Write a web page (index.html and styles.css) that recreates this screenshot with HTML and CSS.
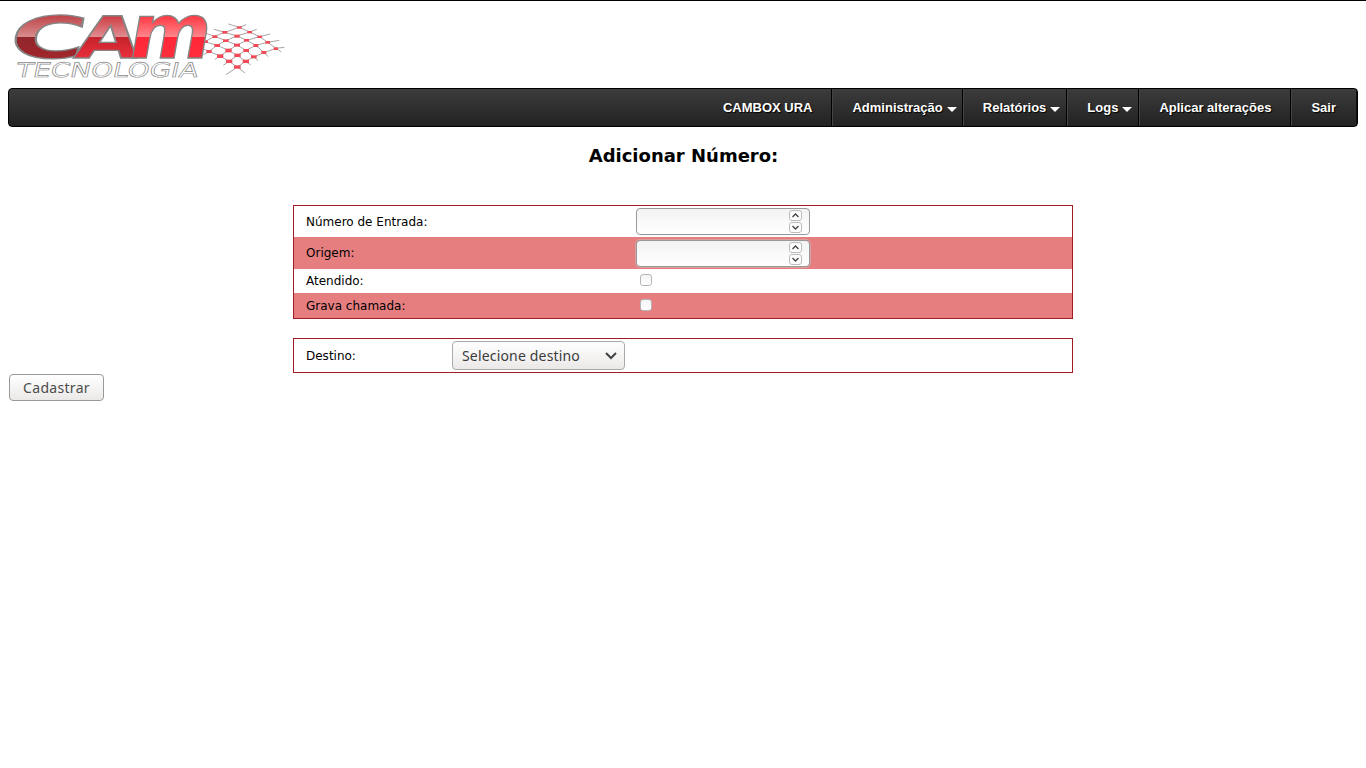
FILE: index.html
```html
<!DOCTYPE html>
<html lang="pt-BR">
<head>
<meta charset="utf-8">
<title>CAMBOX URA</title>
<link rel="stylesheet" href="styles.css">
</head>
<body>
<header class="header">
<svg class="logo" width="290" height="84" viewBox="0 0 290 84">
  <defs>
    <linearGradient id="dark" gradientUnits="userSpaceOnUse" x1="0" y1="-43" x2="0" y2="0">
      <stop offset="0" stop-color="#bd4349"/><stop offset=".5" stop-color="#d98a8c"/><stop offset=".51" stop-color="#90262c"/><stop offset="1" stop-color="#a1262d"/>
    </linearGradient>
    <linearGradient id="mid" gradientUnits="userSpaceOnUse" x1="0" y1="-43" x2="0" y2="0">
      <stop offset="0" stop-color="#cb3940"/><stop offset=".5" stop-color="#e08c90"/><stop offset=".51" stop-color="#c4232d"/><stop offset="1" stop-color="#e92e3b"/>
    </linearGradient>
    <linearGradient id="bright" gradientUnits="userSpaceOnUse" x1="0" y1="-43" x2="0" y2="0">
      <stop offset="0" stop-color="#ff3540"/><stop offset=".5" stop-color="#ff858a"/><stop offset=".51" stop-color="#ff2637"/><stop offset="1" stop-color="#ff2e3c"/>
    </linearGradient>
  </defs>
  <g class="mesh" transform="translate(140 0) scale(.33333)">
    <g fill="none" stroke="#8b8082" stroke-width="2.2">
      <path d="M265 72 298 82 329 96 359 110 383 127 408 145 424 156M222 88 254 97 291 108 320 121 348 136 372 158 385 170M198 100 224 109 257 122 291 135 318 151 341 171 355 182M180 120 195 125 231 136 266 151 292 166 317 184 332 195M186 145 207 154 240 168 267 184 292 201 315 219"/>
      <path d="M319 74 298 82 254 97 224 109 195 125 180 135M350 88 329 96 291 108 257 122 231 136 207 154 190 165M390 102 359 110 320 121 291 135 266 151 240 168 225 178M418 121 383 127 348 136 318 151 292 166 267 184 250 196M433 142 408 145 372 158 341 171 317 184 292 201 258 224"/>
    </g>
    <g fill="#f24b58">
      <rect x="291" y="79" width="14" height="7"/><rect x="322" y="93" width="14" height="7"/><rect x="352" y="107" width="14" height="7"/><rect x="376" y="123" width="14" height="8"/><rect x="401" y="142" width="13" height="8"/>
      <rect x="247" y="93" width="15" height="8"/><rect x="283" y="104" width="16" height="9"/><rect x="312" y="117" width="15" height="8"/><rect x="340" y="132" width="15" height="9"/><rect x="364" y="153" width="15" height="9"/>
      <rect x="217" y="106" width="15" height="8"/><rect x="249" y="118" width="17" height="8"/><rect x="282" y="131" width="18" height="9"/><rect x="310" y="147" width="17" height="9"/><rect x="333" y="166" width="17" height="9"/>
      <rect x="190" y="121" width="14" height="8"/><rect x="223" y="132" width="17" height="9"/><rect x="256" y="146" width="19" height="11"/><rect x="283" y="161" width="19" height="10"/><rect x="308" y="179" width="19" height="10"/>
      <rect x="199" y="150" width="16" height="9"/><rect x="231" y="163" width="19" height="11"/><rect x="258" y="179" width="19" height="10"/><rect x="282" y="196" width="20" height="10"/>
    </g>
  </g>
  <g class="brand">
    <text transform="translate(7 58) skewX(-10)" font-size="58" textLength="76" lengthAdjust="spacingAndGlyphs" fill="url(#dark)">C</text>
    <text transform="translate(73 58) skewX(-10)" font-size="58" textLength="64" lengthAdjust="spacingAndGlyphs" fill="url(#mid)">A</text>
    <text transform="translate(126 58) skewX(-10)" font-size="76" textLength="82" lengthAdjust="spacingAndGlyphs" fill="url(#bright)">m</text>
  </g>
  <text class="brand-sub" transform="translate(15 77) skewX(-12)" textLength="182" lengthAdjust="spacingAndGlyphs">TECNOLOGIA</text>
</svg>
</header>
<nav class="menu">
  <a class="item snug">CAMBOX URA</a>
  <a class="item drop wide">Administração</a>
  <a class="item drop">Relatórios</a>
  <a class="item drop">Logs</a>
  <a class="item snug">Aplicar alterações</a>
  <a class="item">Sair</a>
</nav>
<h1 class="title">Adicionar Número:</h1>
<form>
<section class="panel">
  <div class="row tall"><label class="label">Número de Entrada:</label>
    <span class="spin"><span class="steps"><i><svg viewBox="0 0 11 9"><path d="M2.5 6 5.5 3 8.5 6"/></svg></i><i><svg viewBox="0 0 11 9"><path d="M2.5 3 5.5 6 8.5 3"/></svg></i></span></span></div>
  <div class="row tall alt"><label class="label">Origem:</label>
    <span class="spin"><span class="steps"><i><svg viewBox="0 0 11 9"><path d="M2.5 6 5.5 3 8.5 6"/></svg></i><i><svg viewBox="0 0 11 9"><path d="M2.5 3 5.5 6 8.5 3"/></svg></i></span></span></div>
  <div class="row"><label class="label">Atendido:</label><span class="check"></span></div>
  <div class="row alt last"><label class="label">Grava chamada:</label><span class="check"></span></div>
</section>
<section class="panel target">
  <label class="target-label">Destino:</label>
  <div class="select"><span>Selecione destino</span><svg width="12" height="8" viewBox="0 0 12 8"><path d="M1 1 6 6 11 1"/></svg></div>
</section>
<button class="submit" type="button">Cadastrar</button>
</form>
</body>
</html>
```
FILE: styles.css
```css
* { box-sizing: border-box; }
body { margin: 0; padding: 0 8px; height: 768px; border-top: 1px solid #000; background: #fff; color: #000; font: 12px "DejaVu Sans", sans-serif; }
.header { height: 88px; }
.logo { display: block; margin: -1px 0 4px -8px; overflow: visible; }
.brand { font-family: "DejaVu Sans", sans-serif; font-weight: bold; stroke: #858585; stroke-width: 1.3px; }
.brand-sub { font: 20px "DejaVu Sans", sans-serif; fill: #fff; stroke: #8c8c8c; stroke-width: .6px; }
.menu { display: flex; justify-content: flex-end; height: 39px; border: 1px solid #000; border-radius: 4px; background: linear-gradient(#3c3c3c, #222); }
.item { display: flex; align-items: center; padding: 0 20px 1px 19px; border-left: 1px solid #444; border-right: 1px solid #000; color: #fff; font: bold 13px "Liberation Sans", sans-serif; text-shadow: 1px 1px 1px #000; white-space: nowrap; }
.item:first-child { border-left: 0; }
.item:last-child { border-right: 1px solid #111; }
.snug { padding-right: 19px; }
.drop { padding-right: 6px; }
.drop.wide { padding-right: 5px; }
.drop::after { content: ""; margin: 5px 0 0 4px; border: 5px solid transparent; border-top-color: #fff; border-bottom: 0; }
.title { margin: 0; padding: 18px 0 39px 1px; font: bold 18px/21px "DejaVu Sans", sans-serif; text-align: center; }
.panel { width: 780px; margin: 0 auto; border: 1px solid #a01d26; }
.row { display: flex; align-items: center; height: 24px; }
.row.tall { height: 31px; }
.row.tall.alt { height: 32px; }
.row.last { height: 25px; }
.alt { background: #e67e80; }
.label { width: 342px; padding-left: 12px; }
.spin { display: flex; justify-content: flex-end; width: 174px; height: 27px; padding: 1px 7px 0 0; border: 1px solid #999; border-radius: 4px; background: linear-gradient(#f3f3f3, #fff); }
.alt .spin { box-shadow: 0 0 0 1px #d9a0a1; }
.steps { display: flex; flex-direction: column; gap: 1px; }
.steps i { display: block; width: 13px; height: 11px; border: 1px solid #bbb; border-radius: 3px; background: #fdfdfd; }
.steps svg { display: block; width: 11px; height: 9px; fill: none; stroke: #444; stroke-width: 1.3; }
.check { width: 12px; height: 12px; margin: 0 0 2px 4px; border: 1px solid #b5b5b5; border-radius: 3px; background: linear-gradient(#f4f4f4, #fff); }
.target { display: flex; align-items: center; height: 35px; margin-top: 19px; }
.target-label { width: 158px; padding-left: 12px; }
.select { display: flex; align-items: center; justify-content: space-between; width: 173px; height: 29px; padding: 0 7px 0 9px; border: 1px solid #aaa; border-radius: 4px; background: linear-gradient(#fff, #ebe9e8); color: #3c3c3c; font: 14px "Noto Sans", sans-serif; letter-spacing: .17px; white-space: nowrap; }
.select svg { fill: none; stroke: #444; stroke-width: 2; }
.submit { display: block; width: 95px; height: 27px; margin: 1px 0 0 1px; padding: 0; border: 1px solid #999; border-radius: 4px; background: linear-gradient(#fff, #ebe9e8); color: #4c4c4c; font: 14px "Noto Sans", sans-serif; letter-spacing: .3px; }
```
